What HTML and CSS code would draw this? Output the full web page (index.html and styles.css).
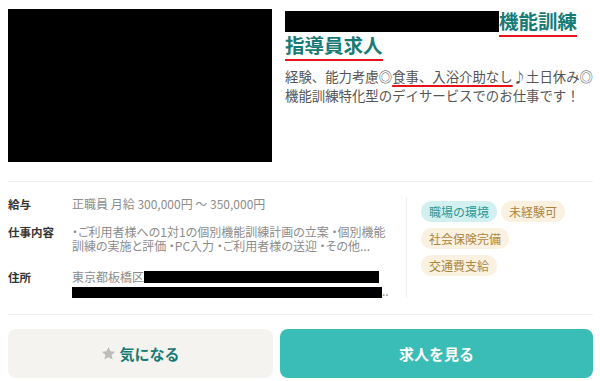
FILE: index.html
```html
<!DOCTYPE html>
<html lang="ja">

<head>
    <meta charset="UTF-8">
    <meta name="viewport" content="width=device-width, initial-scale=1.0">
    <title>求人カード</title>
    <link rel="stylesheet" href="styles.css">
</head>

<body>

    <div class="job-card">
        <div class="job-head">
            <div class="job-photo"></div>
            <div class="job-summary">
                <h2 class="job-title"><span class="redact redact-title"></span><span class="mark">機能訓練</span><br><span class="mark">指導員求人</span></h2>
                <p class="job-lead">経験、能力考慮◎<span class="mark-line">食事、入浴介助なし</span>♪土日休み◎機能訓練特化型のデイサービスでのお仕事です！</p>
            </div>
        </div>

        <div class="job-body">
            <dl class="job-info">
                <div class="info-row">
                    <dt>給与</dt>
                    <dd>正職員 月給 300,000円 ～ 350,000円</dd>
                </div>
                <div class="info-row info-row-wide">
                    <dt>仕事内容</dt>
                    <dd class="tight">・ご利用者様への1対1の個別機能訓練計画の立案 ・個別機能訓練の実施と評価 ・PC入力 ・ご利用者様の送迎 ・その他...</dd>
                </div>
                <div class="info-row">
                    <dt>住所</dt>
                    <dd>東京都板橋区<span class="redact redact-addr1"></span><br><span class="redact redact-addr2"></span>..</dd>
                </div>
            </dl>
            <div class="job-tags">
                <span class="tag tag-teal">職場の環境</span>
                <span class="tag">未経験可</span>
                <span class="tag">社会保険完備</span>
                <span class="tag">交通費支給</span>
            </div>
        </div>

        <div class="job-actions">
            <button class="btn btn-fav">
                <svg class="star" width="15" height="15" viewBox="0 0 24 24"><path d="M12 1.5l3.2 7 7.3.7-5.5 5 1.6 7.3L12 17.8l-6.6 3.7L7 14.2l-5.5-5 7.3-.7z" fill="#bdbcb8"/></svg>
                気になる
            </button>
            <button class="btn btn-main">求人を見る</button>
        </div>
    </div>

</body>

</html>
```

FILE: styles.css
```css
body {
    margin: 0;
    font-family: "Noto Sans CJK JP", "Noto Sans", sans-serif;
    background-color: #fff;
    color: #333;
}

.job-card {
    width: 585px;
    padding: 9px 0 0 8px;
}

.job-head {
    display: flex;
    gap: 13px;
    padding-bottom: 19px;
    border-bottom: 1px solid #f1efea;
}

.job-photo {
    width: 264px;
    height: 153px;
    background-color: #000;
    flex-shrink: 0;
}

.job-summary {
    flex: 1;
}

.job-title {
    margin: 0;
    font-size: 19.5px;
    line-height: 24px;
    font-weight: bold;
    color: #167b76;
}

.mark {
    border-bottom: 2px solid #e5141b;
}

.mark-line {
    text-decoration: underline;
    text-decoration-color: #e5141b;
    text-decoration-thickness: 2px;
    text-underline-offset: 3px;
}

.redact {
    display: inline-block;
    background-color: #000;
    vertical-align: top;
}

.redact-title {
    width: 214px;
    height: 21px;
    margin-top: 2px;
}

.job-lead {
    margin: 10px 0 0;
    font-size: 13.4px;
    line-height: 19px;
    color: #555;
}

.job-body {
    display: flex;
    padding: 15px 0 16px;
    border-bottom: 1px solid #f1efea;
}

.job-info {
    width: 384px;
    margin: 0;
    padding-right: 14px;
    border-right: 1px solid #f1efea;
}

.info-row {
    display: flex;
    margin-bottom: 14px;
    font-size: 12px;
    line-height: 14px;
}

.info-row-wide {
    margin-bottom: 17px;
}

.info-row:last-child {
    margin-bottom: 0;
}

.info-row dt {
    width: 64px;
    flex-shrink: 0;
    font-size: 11.5px;
    font-weight: bold;
    color: #333;
}

.info-row dd {
    margin: 0;
    color: #8c8c8c;
}

.tight {
    font-feature-settings: "palt";
}

.redact-addr1 {
    width: 235px;
    height: 12px;
    margin-top: 1px;
}

.redact-addr2 {
    width: 310px;
    height: 11px;
    margin-top: 3px;
}

.job-tags {
    flex: 1;
    display: flex;
    flex-wrap: wrap;
    align-content: flex-start;
    gap: 6px 4px;
    padding: 4px 10px 0 14px;
}

.tag {
    height: 21px;
    padding: 0 8px;
    border-radius: 10px;
    font-size: 12px;
    line-height: 21px;
    background-color: #faf1e0;
    color: #ad853c;
}

.tag-teal {
    background-color: #d2f0ef;
    color: #2f9694;
}

.job-actions {
    display: flex;
    gap: 7px;
    padding-top: 14px;
}

.btn {
    height: 49px;
    border: none;
    border-radius: 8px;
    font-family: inherit;
    font-size: 15px;
    font-weight: bold;
    cursor: pointer;
    display: flex;
    align-items: center;
    justify-content: center;
    gap: 3px;
}

.btn-fav {
    width: 265px;
    background-color: #f5f3ef;
    color: #167b76;
}

.btn-main {
    flex: 1;
    background-color: #3bbdb7;
    color: #fff;
}
```
